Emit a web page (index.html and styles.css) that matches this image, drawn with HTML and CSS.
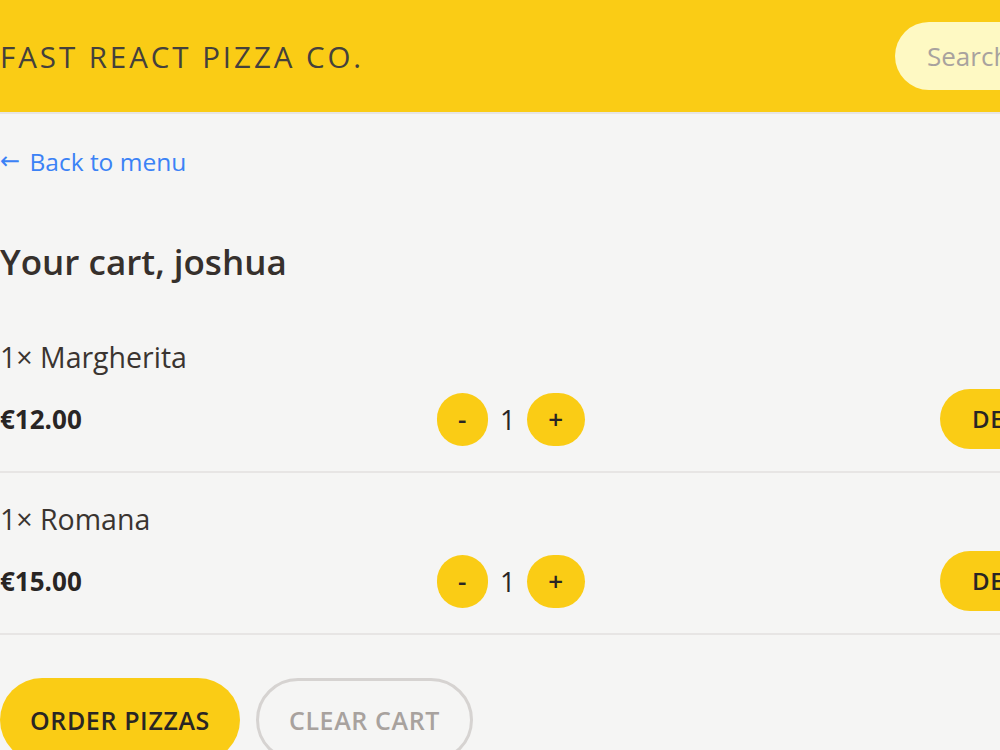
FILE: index.html
```html
<!DOCTYPE html>
<html lang="en">
<head>
    <meta charset="UTF-8">
    <meta name="viewport" content="width=device-width, initial-scale=1.0">
    <title>Fast React Pizza Co.</title>
    <link rel="stylesheet" href="styles.css">
</head>
<body>
    <header class="header">
        <a href="#" class="logo">Fast React Pizza Co.</a>
        <form class="search-form">
            <input type="text" class="search" placeholder="Search order #">
        </form>
    </header>

    <main class="main">
        <a href="#" class="back-link"><span class="arrow">&larr;</span> Back to menu</a>

        <h2 class="cart-title">Your cart, joshua</h2>

        <ul class="cart-list">
            <li class="cart-item">
                <p class="item-name">1&times; Margherita</p>
                <div class="item-row">
                    <p class="item-price">€12.00</p>
                    <div class="qty">
                        <button class="btn btn-round">-</button>
                        <span class="qty-value">1</span>
                        <button class="btn btn-round">+</button>
                    </div>
                    <button class="btn btn-small">Delete</button>
                </div>
            </li>
            <li class="cart-item">
                <p class="item-name">1&times; Romana</p>
                <div class="item-row">
                    <p class="item-price">€15.00</p>
                    <div class="qty">
                        <button class="btn btn-round">-</button>
                        <span class="qty-value">1</span>
                        <button class="btn btn-round">+</button>
                    </div>
                    <button class="btn btn-small">Delete</button>
                </div>
            </li>
        </ul>

        <div class="actions">
            <a href="#" class="btn btn-primary">Order pizzas</a>
            <button class="btn btn-secondary">Clear cart</button>
        </div>
    </main>
</body>
</html>
```

FILE: styles.css
```css
body {
    margin: 0;
    font-family: "Open Sans", "Noto Sans", sans-serif;
    background-color: #f5f5f4;
    color: #292524;
    overflow: hidden;
}
a {
    text-decoration: none;
}
p {
    margin: 0;
}

/* header bar */
.header {
    display: flex;
    align-items: center;
    justify-content: space-between;
    width: 1407px;
    height: 112px;
    background-color: #facc15;
    border-bottom: 2px solid #e7e5e4;
}
.logo {
    font-size: 29.5px;
    letter-spacing: 0.1em;
    text-transform: uppercase;
    color: #44403c;
}
.search {
    width: 512px;
    height: 68px;
    box-sizing: border-box;
    padding: 0 32px;
    border: none;
    border-radius: 999px;
    background-color: #fef9c3;
    font-family: inherit;
    font-size: 26px;
    color: #44403c;
    outline: none;
}
.search::placeholder {
    color: #a8a29e;
}

/* cart */
.main {
    padding-top: 28px;
}
.back-link {
    display: inline-block;
    font-size: 24.5px;
    line-height: 40px;
    color: #3b82f6;
}
.arrow {
    font-family: "DejaVu Sans", sans-serif;
    font-size: 24px;
    line-height: 0;
    margin-right: 3px;
    position: relative;
    top: -2px;
}
.cart-title {
    margin: 52px 0 0;
    font-size: 35px;
    line-height: 56px;
    font-weight: 600;
    color: #36302c;
}
.cart-list {
    list-style: none;
    margin: 21px 0 0;
    padding: 0;
    width: 1092px;
}
.cart-item {
    padding: 26px 0 22px;
    border-bottom: 2px solid #e7e5e4;
}
.item-name {
    font-size: 28.5px;
    line-height: 40px;
    margin-bottom: 12px;
    color: #3a3430;
}
.item-row {
    display: flex;
    align-items: center;
    justify-content: space-between;
}
.item-price {
    font-size: 26px;
    font-weight: 700;
}
.qty {
    display: flex;
    align-items: center;
    gap: 12px;
}
.qty-value {
    font-size: 27px;
}

/* buttons */
.btn {
    display: inline-block;
    border: none;
    border-radius: 999px;
    background-color: #facc15;
    color: #292524;
    font-family: inherit;
    font-weight: 600;
    text-transform: uppercase;
    letter-spacing: 0.025em;
    cursor: pointer;
}
.btn-round {
    padding: 6px 21px;
    font-size: 26px;
    line-height: 41px;
}
.btn-small {
    padding: 12px 32px;
    font-size: 24px;
    line-height: 36px;
}
.actions {
    display: flex;
    gap: 16px;
    margin-top: 43px;
}
.btn-primary {
    padding: 24px 30px;
    font-size: 25px;
    line-height: 36px;
}
.btn-secondary {
    padding: 21px 30px;
    font-size: 25px;
    line-height: 36px;
    background-color: transparent;
    border: 3px solid #d6d3d1;
    color: #a8a29e;
}
```
